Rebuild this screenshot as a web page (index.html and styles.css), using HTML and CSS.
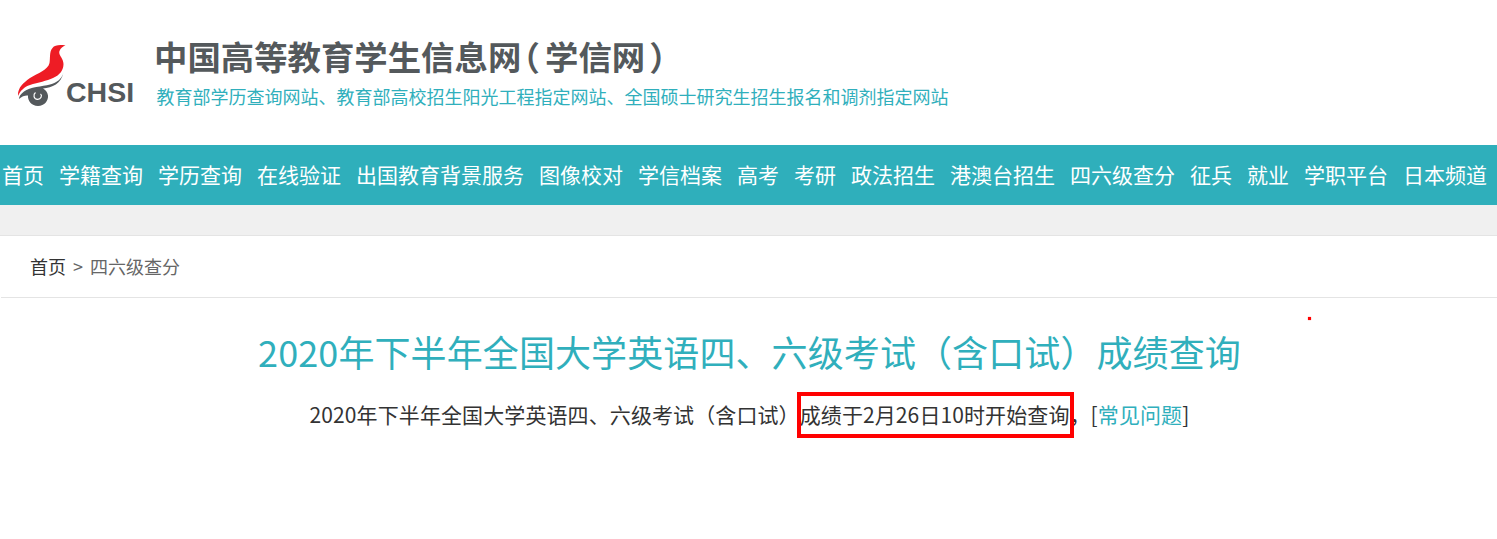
FILE: index.html
```html
<!DOCTYPE html>
<html lang="zh-CN">
<head>
<meta charset="utf-8">
<title>四六级查分</title>
<link rel="stylesheet" href="styles.css">
</head>
<body>
<header class="header">
  <div class="logo">
    <svg class="logo-mark" width="52" height="62" viewBox="16 45 52 62" aria-hidden="true">
      <path class="bird" d="M65.500 45.500C60 44.500 54.500 45 52.500 48C49 52 50.500 58 49.500 63C48 70 38 73 30 78C23 83 17.500 88 18 96C20 91 24 87 30 85C38 82.500 47 81 53 78C60 75 63.500 70 63.500 64C63.500 58 58 55 59.500 51C60.500 48 63 46.500 65.500 45.500Z"/>
      <path class="swoosh" d="M63.500 72C62 79 57 82.500 50 84.500C42 86.500 30 87 24 91.500C20.500 94 19 96.500 19 99C22 96 25.500 95.200 28 95.500C27.500 100.500 31.500 106 38 106C44.500 106 48.500 100.500 48 95.500C47.500 92 45.500 90 43 88.500C52 87.500 61.500 84 63.500 72Z"/>
      <path class="swirl" d="M35.500 92.500C33 94.500 33.500 99 37.500 99.300C41 99.500 42.500 95.500 40.500 94"/>
    </svg>
    <span class="logo-text">CHSI</span>
  </div>
  <div class="site">
    <h1 class="site-name">中国高等教育学生信息网<span class="paren-open">（</span>学信网<span class="paren-close">）</span></h1>
    <p class="site-desc">教育部学历查询网站、教育部高校招生阳光工程指定网站、全国硕士研究生招生报名和调剂指定网站</p>
  </div>
</header>
<nav class="nav">
  <a>首页</a><a>学籍查询</a><a>学历查询</a><a>在线验证</a><a>出国教育背景服务</a><a>图像校对</a><a>学信档案</a><a>高考</a><a>考研</a><a>政法招生</a><a>港澳台招生</a><a>四六级查分</a><a>征兵</a><a>就业</a><a>学职平台</a><a>日本频道</a>
</nav>
<div class="band"></div>
<div class="crumb"><span class="crumb-home">首页</span><span class="crumb-sep">&gt;</span><span class="crumb-cur">四六级查分</span></div>
<main class="main">
  <h2 class="title">2020年下半年全国大学英语四、六级考试（含口试）成绩查询</h2>
  <p class="notice">2020年下半年全国大学英语四、六级考试（含口试）成绩于2月26日10时开始查询，[<a class="link">常见问题</a>]</p>
</main>
<div class="mark-box"></div>
<div class="mark-dot"></div>
</body>
</html>
```

FILE: styles.css
```css
* { box-sizing: border-box; }
html, body { margin: 0; padding: 0; }
body {
  position: relative;
  height: 539px;
  overflow: hidden;
  background: #fff;
  color: #333;
  font-family: "Noto Sans CJK SC", "Liberation Sans", sans-serif;
}
.header {
  height: 145px;
  display: flex;
  align-items: flex-start;
  padding: 35px 0 0 17px;
}
.logo {
  display: flex;
  align-items: flex-end;
  width: 138px;
  height: 72px;
  padding: 10px 0 0;
  flex: none;
}
.logo-mark { flex: none; margin: 0 -2px 0 -1px; }
.bird { fill: #ee1c25; }
.swoosh { fill: #54595c; }
.swirl { fill: none; stroke: #fff; stroke-width: 1.2; }
.logo-text {
  font: bold 28.5px/28px "Liberation Sans", sans-serif;
  color: #54595c;
  margin-bottom: 1px;
}
.site-name {
  margin: 0 0 0 -1px;
  font-size: 33.4px;
  line-height: 42px;
  font-weight: 700;
  color: #54595c;
  white-space: nowrap;
}
.paren-open { font-feature-settings: "halt"; margin: 0 5px 0 2px; }
.paren-close { font-feature-settings: "halt"; margin-left: 4px; }
.site-desc {
  margin: -1px 0 0 1.500px;
  font-size: 18px;
  line-height: 40px;
  color: #30afbc;
}
.nav {
  height: 60px;
  background: #2fafbb;
  display: flex;
  align-items: center;
  gap: 15px;
  padding: 0 0 2px 2px;
  color: #fff;
  font-size: 21px;
  white-space: nowrap;
}
.band {
  height: 31px;
  background: #f0f0f0;
  border-bottom: 1px solid #e4e4e4;
}
.crumb {
  height: 62px;
  margin-left: 1px;
  padding: 0 0 2px 29px;
  display: flex;
  align-items: center;
  gap: 7px;
  border-bottom: 1px solid #e4e4e4;
  font-size: 18px;
}
.crumb-home { color: #333; }
.crumb-sep, .crumb-cur { color: #666; }
.main { text-align: center; padding-left: 2px; }
.title {
  margin: 26px 0 0;
  font-size: 36px;
  line-height: 54px;
  font-weight: 400;
  letter-spacing: 0.100px;
  color: #30afbc;
}
.notice {
  margin: 20px 0 0;
  font-size: 21px;
  line-height: 32px;
  letter-spacing: 0.100px;
  color: #333;
}
.link { color: #30afbc; }
.mark-box {
  position: absolute;
  left: 797px;
  top: 392px;
  width: 277px;
  height: 46px;
  border: 4px solid #f00;
}
.mark-dot {
  position: absolute;
  left: 1308px;
  top: 317px;
  width: 3px;
  height: 3px;
  background: #f00;
  box-shadow: 0 0 1px #f00;
}
```
